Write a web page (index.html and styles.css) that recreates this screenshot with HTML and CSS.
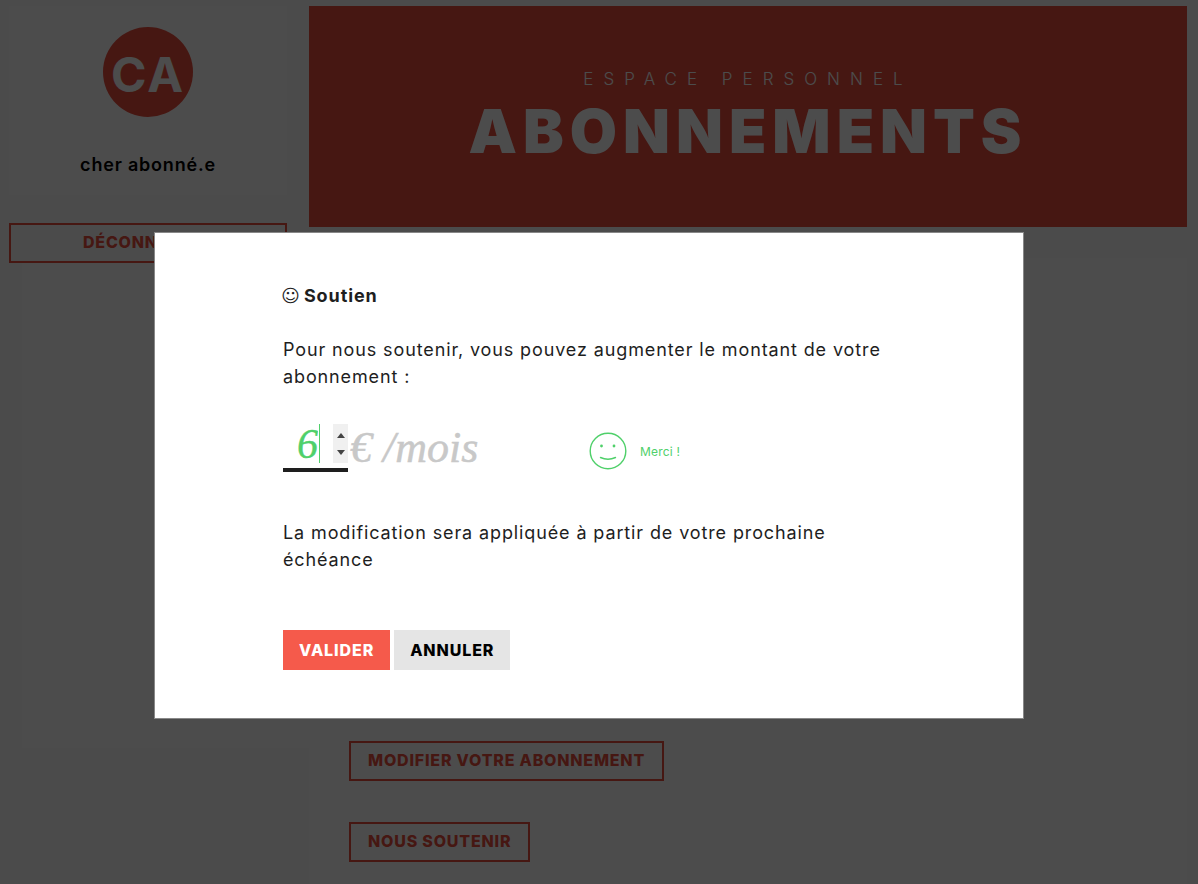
FILE: index.html
```html
<!DOCTYPE html>
<html lang="fr">
<head>
    <meta charset="UTF-8">
    <meta name="viewport" content="width=device-width, initial-scale=1.0">
    <title>Abonnements</title>
    <link rel="stylesheet" href="styles.css">
</head>
<body>
    <div class="page">
        <aside class="sidebar">
            <div class="profile">
                <div class="avatar">CA</div>
                <p class="profile-name">cher abonné.e</p>
            </div>
            <a class="outline-btn logout" href="#">DÉCONNEXION</a>
            <div class="side-panel"></div>
        </aside>

        <main class="content">
            <header class="banner">
                <p class="banner-kicker">ESPACE PERSONNEL</p>
                <h1 class="banner-title">ABONNEMENTS</h1>
            </header>
            <section class="panel">
                <a class="outline-btn" href="#">MODIFIER VOTRE ABONNEMENT</a>
                <a class="outline-btn" href="#">NOUS SOUTENIR</a>
            </section>
        </main>
    </div>

    <!-- Modal -->
    <div class="overlay"></div>
    <div class="modal">
        <h2 class="modal-title"><span class="title-icon">☺</span> Soutien</h2>
        <p class="modal-text">Pour nous soutenir, vous pouvez augmenter le montant de votre abonnement :</p>

        <div class="amount-row">
            <div class="amount-field">
                <input class="amount-input" type="number" value="6" min="5">
                <div class="spinner">
                    <span class="spin-up"></span>
                    <span class="spin-down"></span>
                </div>
            </div>
            <span class="amount-unit">€ /mois</span>
            <div class="thanks">
                <svg class="thanks-icon" width="38" height="38" viewBox="0 0 38 38" fill="none" stroke="#4fd06a" stroke-width="1.4" stroke-linecap="round">
                    <circle cx="19" cy="19" r="17.8"/>
                    <path d="M11.5 25.5 Q19 29 26.5 25.5"/>
                    <circle cx="12.5" cy="14" r="0.7" fill="#4fd06a"/>
                    <circle cx="25" cy="14" r="0.7" fill="#4fd06a"/>
                </svg>
                <span class="thanks-text">Merci !</span>
            </div>
        </div>

        <p class="modal-text notice">La modification sera appliquée à partir de votre prochaine échéance</p>

        <div class="modal-actions">
            <button class="btn btn-primary">VALIDER</button>
            <button class="btn btn-muted">ANNULER</button>
        </div>
    </div>
</body>
</html>
```

FILE: styles.css
```css
* {
    box-sizing: border-box;
    margin: 0;
    padding: 0;
}

body {
    height: 884px;
    overflow: hidden;
    background-color: #fafafa;
    font-family: Inter, "Open Sans", sans-serif;
}

.page {
    display: flex;
    gap: 22px;
    padding: 6px 11px 0 9px;
    height: 884px;
}

.sidebar {
    display: flex;
    flex-direction: column;
    width: 278px;
    flex-shrink: 0;
}

.profile {
    height: 189px;
    padding-top: 21px;
    background-color: #fff;
    text-align: center;
}

.avatar {
    width: 90px;
    height: 90px;
    margin: 0 auto;
    border-radius: 50%;
    background-color: #ea4f3f;
    color: #fff;
    font-size: 48px;
    font-weight: 700;
    letter-spacing: 2px;
    line-height: 96px;
}

.profile-name {
    margin-top: 37px;
    color: #000;
    font-size: 18px;
    font-weight: 600;
    letter-spacing: 0.8px;
}

.outline-btn {
    display: inline-block;
    align-self: flex-start;
    height: 40px;
    padding: 0 17px;
    border: 2px solid #ea4f3f;
    color: #ea4f3f;
    font-size: 16px;
    font-weight: 800;
    letter-spacing: 0.8px;
    line-height: 35px;
    text-decoration: none;
}

.logout {
    align-self: stretch;
    margin-top: 28px;
    text-align: center;
}

.side-panel {
    height: 485px;
    margin-left: 13px;
    margin-right: -22px;
    background-color: #fff;
}

.content {
    flex: 1;
    display: flex;
    flex-direction: column;
}

.banner {
    height: 221px;
    padding-top: 62px;
    background-color: #e94d3e;
    color: #fff;
    text-align: center;
}

.banner-kicker {
    font-size: 17px;
    font-weight: 300;
    letter-spacing: 10px;
    line-height: 22px;
}

.banner-title {
    margin-top: 6px;
    font-size: 61px;
    font-weight: 900;
    letter-spacing: 6px;
    line-height: 70px;
}

.panel {
    flex: 1;
    display: flex;
    flex-direction: column;
    gap: 41px;
    margin-top: 31px;
    padding: 483px 40px 0;
    background-color: #fff;
}

.overlay {
    position: fixed;
    top: 0;
    left: 0;
    width: 100%;
    height: 100%;
    background-color: rgba(0, 0, 0, 0.7);
}

.modal {
    position: fixed;
    top: 232px;
    left: 154px;
    width: 870px;
    height: 487px;
    padding: 52px 128px 0;
    border: 1px solid #888;
    background-color: #fff;
    color: #1e1e1e;
}

.modal-title {
    font-size: 18px;
    font-weight: 700;
    letter-spacing: 0.9px;
    line-height: 22px;
}

.title-icon {
    margin-left: -2px;
    margin-right: -1px;
    font-family: "DejaVu Sans", sans-serif;
    font-weight: 400;
    letter-spacing: 0;
}

.modal-text {
    width: 610px;
    margin-top: 29px;
    font-size: 18px;
    font-weight: 400;
    letter-spacing: 0.88px;
    line-height: 27px;
}

.amount-row {
    display: flex;
    align-items: flex-start;
    margin-top: 34px;
    height: 51px;
}

.amount-field {
    position: relative;
    display: flex;
    align-items: flex-start;
    width: 65px;
    height: 48px;
    border-bottom: 4px solid #1e1e1e;
}

/* the text caret, drawn so it does not blink */
.amount-field::after {
    content: "";
    position: absolute;
    top: 0;
    left: 36px;
    width: 1px;
    height: 39px;
    background-color: #4fd06a;
}

.amount-input {
    width: 50px;
    height: 39px;
    padding-right: 15px;
    border: none;
    outline: none;
    color: #4fd06a;
    font-family: "Liberation Serif", serif;
    font-size: 42px;
    font-style: italic;
    text-align: right;
    -webkit-text-stroke: 0.4px #4fd06a;
    appearance: textfield;
}

.amount-input::-webkit-inner-spin-button,
.amount-input::-webkit-outer-spin-button {
    display: none;
    margin: 0;
}

.spinner {
    display: flex;
    flex-direction: column;
    align-items: center;
    justify-content: center;
    gap: 12px;
    width: 15px;
    height: 39px;
    background-color: #f0f0f0;
}

.spin-up,
.spin-down {
    width: 0;
    height: 0;
    border-left: 4px solid transparent;
    border-right: 4px solid transparent;
}

.spin-up {
    border-bottom: 5px solid #444;
}

.spin-down {
    border-top: 5px solid #444;
}

.amount-unit {
    width: 129px;
    padding-left: 2px;
    color: #c8c8c8;
    font-family: "Liberation Serif", serif;
    font-size: 44px;
    font-style: italic;
    line-height: 48px;
    -webkit-text-stroke: 0.5px #c8c8c8;
    white-space: nowrap;
}

.thanks {
    display: flex;
    align-items: center;
    gap: 13px;
    margin-top: 8px;
    margin-left: 112px;
}

.thanks-text {
    color: #4fd06a;
    font-size: 12px;
    letter-spacing: 0.2px;
}

.notice {
    margin-top: 44px;
}

.modal-actions {
    display: flex;
    gap: 4px;
    margin-top: 57px;
}

.btn {
    height: 40px;
    padding: 0 16px;
    border: none;
    font-family: Inter, "Open Sans", sans-serif;
    font-size: 16px;
    font-weight: 800;
    letter-spacing: 0.9px;
}

.btn-primary {
    background-color: #f55a4b;
    color: #fff;
}

.btn-muted {
    background-color: #e5e5e5;
    color: #000;
}
```
